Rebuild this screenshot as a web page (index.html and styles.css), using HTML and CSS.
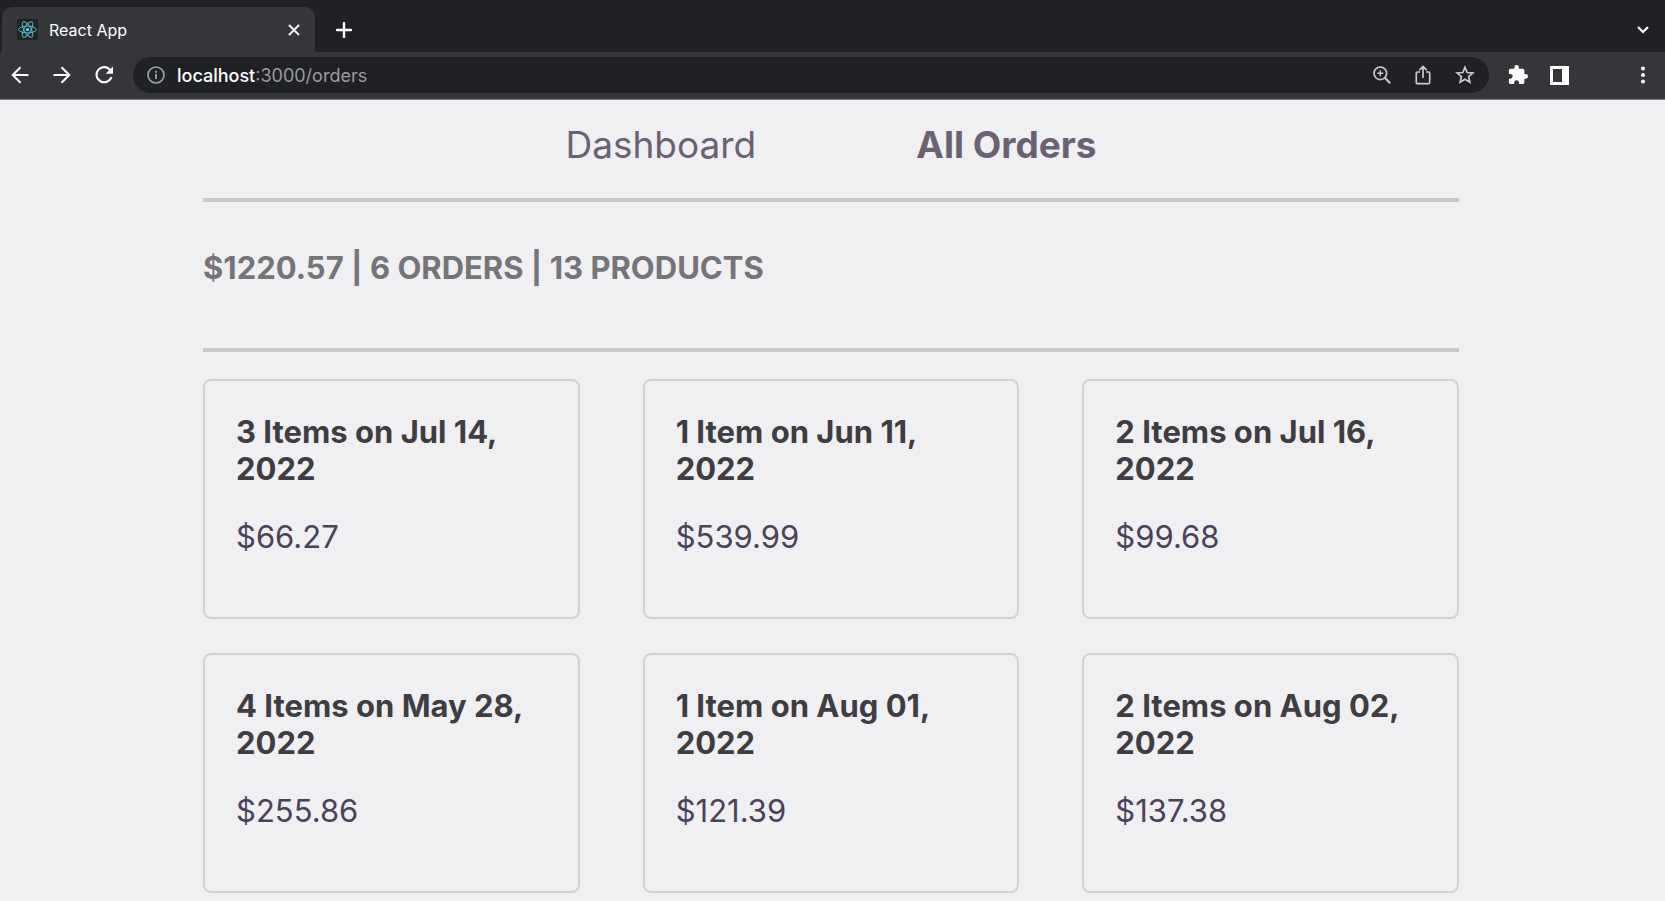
FILE: index.html
```html
<!DOCTYPE html>
<html lang="en">
<head>
    <meta charset="UTF-8">
    <title>React App</title>
    <link rel="stylesheet" href="styles.css">
</head>
<body>
    <header class="browser">
        <div class="tab-strip">
            <div class="tab">
                <svg class="favicon" viewBox="0 0 21 21" width="21" height="21">
                    <rect width="21" height="21" rx="2" fill="#222"/>
                    <g fill="none" stroke="#53b9d1" stroke-width="1">
                        <ellipse cx="10.5" cy="10.5" rx="8.8" ry="3.4"/>
                        <ellipse cx="10.5" cy="10.5" rx="8.8" ry="3.4" transform="rotate(60 10.5 10.5)"/>
                        <ellipse cx="10.5" cy="10.5" rx="8.8" ry="3.4" transform="rotate(120 10.5 10.5)"/>
                    </g>
                    <circle cx="10.5" cy="10.5" r="1.6" fill="#61dafb"/>
                </svg>
                <span class="tab-title">React App</span>
                <button class="icon-btn" aria-label="Close tab">
                    <svg viewBox="0 0 12 12" width="12" height="12"><path d="M1 1l10 10M11 1L1 11" stroke="#fff" stroke-width="1.8" fill="none"/></svg>
                </button>
            </div>
            <button class="icon-btn new-tab" aria-label="New tab">
                <svg viewBox="0 0 16 16" width="16" height="16"><path d="M8 1v14M1 8h14" stroke="#fff" stroke-width="2.4" stroke-linecap="round"/></svg>
            </button>
            <button class="icon-btn tab-search" aria-label="Search tabs">
                <svg viewBox="0 0 12 8" width="12" height="8"><path d="M1 1l5 5 5-5" stroke="#fff" stroke-width="2.2" fill="none"/></svg>
            </button>
        </div>
        <div class="toolbar">
            <div class="history">
                <button class="icon-btn" aria-label="Back">
                    <svg viewBox="0 0 18 18" width="18" height="18"><path d="M17.500 9H2M9.500 1.200L1.700 9l7.800 7.800" stroke="#fff" stroke-width="2" fill="none"/></svg>
                </button>
                <button class="icon-btn" aria-label="Forward">
                    <svg viewBox="0 0 18 18" width="18" height="18"><path d="M.5 9H16M8.500 1.200L16.300 9l-7.800 7.800" stroke="#fff" stroke-width="2" fill="none"/></svg>
                </button>
                <button class="icon-btn" aria-label="Reload">
                    <svg viewBox="0 0 18 18" width="18" height="18"><path d="M15.300 4.200A7.600 7.600 0 1 0 16.400 11" stroke="#fff" stroke-width="2.1" fill="none"/><path d="M18 .4v7.400h-7.400z" fill="#fff"/></svg>
                </button>
            </div>
            <div class="address-bar">
                <svg viewBox="0 0 18 18" width="18" height="18"><circle cx="9" cy="9" r="8" fill="none" stroke="#9aa0a6" stroke-width="1.700"/><path d="M9 8v5M9 4.700v2" stroke="#9aa0a6" stroke-width="1.900"/></svg>
                <span class="url"><span class="host">localhost</span>:3000/orders</span>
                <div class="address-actions">
                    <button class="icon-btn" aria-label="Zoom">
                        <svg viewBox="0 0 18 18" width="18" height="18" fill="none" stroke="#c8cacc"><circle cx="7.300" cy="7.300" r="6.300" stroke-width="1.700"/><path d="M11.800 11.800l5.400 5.400" stroke-width="2.100"/><path d="M7.300 4.300v6M4.300 7.300h6" stroke-width="1.400"/></svg>
                    </button>
                    <button class="icon-btn" aria-label="Share">
                        <svg viewBox="0 0 18 20" width="18" height="20" fill="none" stroke="#c8cacc" stroke-width="1.700"><path d="M6 7H3.500Q2.300 7 2.300 8.200v9.300q0 1.200 1.200 1.200h11q1.200 0 1.200-1.200V8.200Q15.700 7 14.500 7H12M9 13V2M5.300 5.200L9 1.500l3.700 3.700"/></svg>
                    </button>
                    <button class="icon-btn" aria-label="Bookmark">
                        <svg viewBox="0 0 20 20" width="20" height="20"><path d="M10 2.300l2.200 5.200 5.700.5-4.300 3.700 1.300 5.500-4.900-2.900-4.900 2.900 1.300-5.500L2.100 8l5.700-.5z" fill="none" stroke="#c8cacc" stroke-width="1.700"/></svg>
                    </button>
                </div>
            </div>
            <div class="extensions">
                <button class="icon-btn" aria-label="Extensions">
                    <svg viewBox="1 1 22 22" width="20" height="20"><path fill="#fff" d="M20.500 11H19V7c0-1.100-.9-2-2-2h-4V3.500a2.500 2.500 0 0 0-5 0V5H4c-1.100 0-2 .9-2 2v3.800h1.500a2.700 2.700 0 0 1 0 5.400H2V20c0 1.100.9 2 2 2h3.800v-1.500a2.700 2.700 0 0 1 5.400 0V22H17c1.100 0 2-.9 2-2v-4h1.500a2.500 2.500 0 0 0 0-5z"/></svg>
                </button>
                <button class="icon-btn" aria-label="Side panel">
                    <svg viewBox="0 0 19 19" width="19" height="19"><path fill="#fff" fill-rule="evenodd" d="M0 0h19v19H0zM3 3v13h9V3z"/></svg>
                </button>
            </div>
            <button class="icon-btn menu" aria-label="Menu">
                <svg viewBox="0 0 6 18" width="6" height="18" fill="#fff"><circle cx="3" cy="2.500" r="2"/><circle cx="3" cy="9" r="2"/><circle cx="3" cy="15.500" r="2"/></svg>
            </button>
        </div>
    </header>

    <main class="page">
        <nav class="nav">
            <a href="#dashboard">Dashboard</a>
            <a href="#orders" class="active">All Orders</a>
        </nav>
        <h1 class="summary">$1220.57 | 6 ORDERS | 13 PRODUCTS</h1>
        <section class="orders">
            <article class="card">
                <h2>3 Items on Jul 14, 2022</h2>
                <p>$66.27</p>
            </article>
            <article class="card">
                <h2>1 Item on Jun 11, 2022</h2>
                <p>$539.99</p>
            </article>
            <article class="card">
                <h2>2 Items on Jul 16, 2022</h2>
                <p>$99.68</p>
            </article>
            <article class="card">
                <h2>4 Items on May 28, 2022</h2>
                <p>$255.86</p>
            </article>
            <article class="card">
                <h2>1 Item on Aug 01, 2022</h2>
                <p>$121.39</p>
            </article>
            <article class="card">
                <h2>2 Items on Aug 02, 2022</h2>
                <p>$137.38</p>
            </article>
        </section>
    </main>
</body>
</html>
```
FILE: styles.css
```css
* {
    box-sizing: border-box;
}

body {
    font-family: Inter, "Liberation Sans", sans-serif;
    background-color: #f0f0f3;
    margin: 0;
}

.browser {
    background-color: #202124;
    border-bottom: 1px solid #77777a;
}

.icon-btn {
    display: flex;
    padding: 0;
    border: none;
    background: none;
    cursor: pointer;
}

.tab-strip {
    display: flex;
    align-items: center;
    height: 52px;
    padding: 7px 16px 0 2px;
}

.tab {
    display: flex;
    align-items: center;
    width: 313px;
    height: 45px;
    padding: 0 15px;
    background-color: #35363a;
    border-radius: 10px 10px 0 0;
}

.tab-title {
    flex: 1;
    margin-left: 11px;
    color: #fff;
    font-size: 16px;
}

.new-tab {
    margin-left: 21px;
}

.tab-search {
    margin-left: auto;
}

.toolbar {
    display: flex;
    align-items: center;
    height: 47px;
    padding: 0 19px 1px 11px;
    background-color: #35363a;
}

.history {
    display: flex;
    gap: 24px;
}

.address-bar {
    display: flex;
    align-items: center;
    flex: 1;
    height: 36px;
    margin-left: 20px;
    padding: 0 14px;
    background-color: #202124;
    border-radius: 18px;
}

.url {
    margin-left: 12px;
    color: #9a9b9e;
    font-size: 18px;
}

.host {
    color: #fff;
    font-weight: 500;
}

.address-actions {
    display: flex;
    align-items: center;
    gap: 23px;
    margin-left: auto;
}

.extensions {
    display: flex;
    align-items: center;
    gap: 22px;
    margin-left: 19px;
}

.menu {
    margin-left: 71px;
}

.page {
    padding: 0 206px 34px 203px;
}

.nav {
    display: flex;
    justify-content: center;
    gap: 160px;
    padding: 21px 0 29px;
    border-bottom: 4px solid #c9c9c9;
    font-size: 37px;
    line-height: 48px;
}

.nav a {
    color: #6a6272;
    font-weight: 400;
    text-decoration: none;
}

.nav .active {
    font-weight: 700;
}

.summary {
    margin: 0 0 27px;
    padding: 47px 0 62px;
    border-bottom: 4px solid #c9c9c9;
    color: #757478;
    font-size: 31px;
    font-weight: 700;
    line-height: 37px;
}

.orders {
    display: grid;
    grid-template-columns: repeat(3, 1fr);
    gap: 34px 63px;
}

.card {
    padding: 32px 31px 31px;
    border: 2px solid #d2d2d4;
    border-radius: 8px;
}

.card h2,
.card p {
    margin: 0;
    font-size: 31px;
    line-height: 37px;
}

.card h2 {
    color: #3e3d41;
    font-weight: 700;
}

.card p {
    margin: 31px 0;
    color: #4a4259;
    font-weight: 400;
}
```
